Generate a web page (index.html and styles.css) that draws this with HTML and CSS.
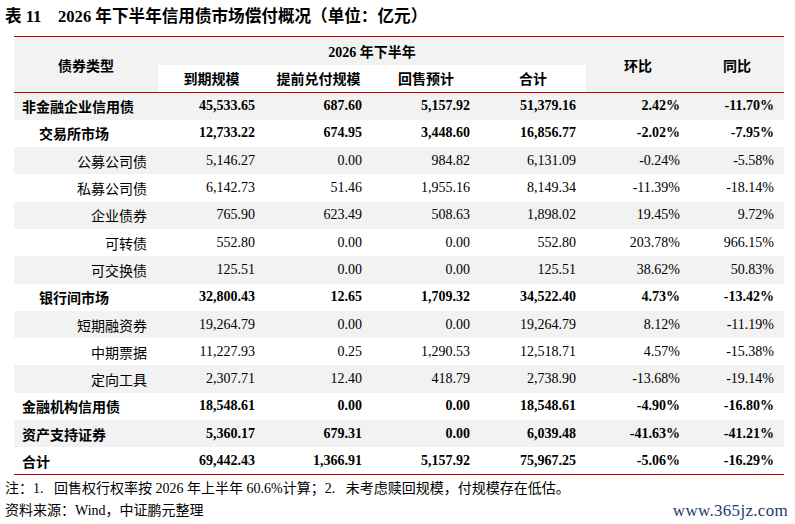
FILE: index.html
```html
<!DOCTYPE html>
<html lang="zh-CN">
<head>
<meta charset="utf-8">
<title>2026年下半年信用债市场偿付概况</title>
<link rel="stylesheet" href="styles.css">
</head>
<body>
<div class="page">
  <h1 class="title">表 11&ensp;&ensp;2026 年下半年信用债市场偿付概况（单位：亿元）</h1>
  <table class="data">
    <colgroup>
      <col class="c1"><col class="c2"><col class="c3"><col class="c4"><col class="c5"><col class="c6"><col class="c7">
    </colgroup>
    <thead>
      <tr class="h1">
        <th rowspan="2" class="grey">债券类型</th>
        <th colspan="4" class="grey period">2026 年下半年</th>
        <th rowspan="2" class="grey">环比</th>
        <th rowspan="2" class="grey">同比</th>
      </tr>
      <tr class="h2">
        <th>到期规模</th>
        <th>提前兑付规模</th>
        <th>回售预计</th>
        <th>合计</th>
      </tr>
    </thead>
    <tbody>
      <tr class="l1 g"><td class="lab">非金融企业信用债</td><td>45,533.65</td><td>687.60</td><td>5,157.92</td><td>51,379.16</td><td>2.42%</td><td>-11.70%</td></tr>
      <tr class="l2"><td class="lab">交易所市场</td><td>12,733.22</td><td>674.95</td><td>3,448.60</td><td>16,856.77</td><td>-2.02%</td><td>-7.95%</td></tr>
      <tr class="l3 g"><td class="lab">公募公司债</td><td>5,146.27</td><td>0.00</td><td>984.82</td><td>6,131.09</td><td>-0.24%</td><td>-5.58%</td></tr>
      <tr class="l3"><td class="lab">私募公司债</td><td>6,142.73</td><td>51.46</td><td>1,955.16</td><td>8,149.34</td><td>-11.39%</td><td>-18.14%</td></tr>
      <tr class="l3 g"><td class="lab">企业债券</td><td>765.90</td><td>623.49</td><td>508.63</td><td>1,898.02</td><td>19.45%</td><td>9.72%</td></tr>
      <tr class="l3"><td class="lab">可转债</td><td>552.80</td><td>0.00</td><td>0.00</td><td>552.80</td><td>203.78%</td><td>966.15%</td></tr>
      <tr class="l3 g"><td class="lab">可交换债</td><td>125.51</td><td>0.00</td><td>0.00</td><td>125.51</td><td>38.62%</td><td>50.83%</td></tr>
      <tr class="l2"><td class="lab">银行间市场</td><td>32,800.43</td><td>12.65</td><td>1,709.32</td><td>34,522.40</td><td>4.73%</td><td>-13.42%</td></tr>
      <tr class="l3 g"><td class="lab">短期融资券</td><td>19,264.79</td><td>0.00</td><td>0.00</td><td>19,264.79</td><td>8.12%</td><td>-11.19%</td></tr>
      <tr class="l3"><td class="lab">中期票据</td><td>11,227.93</td><td>0.25</td><td>1,290.53</td><td>12,518.71</td><td>4.57%</td><td>-15.38%</td></tr>
      <tr class="l3 g"><td class="lab">定向工具</td><td>2,307.71</td><td>12.40</td><td>418.79</td><td>2,738.90</td><td>-13.68%</td><td>-19.14%</td></tr>
      <tr class="l1"><td class="lab">金融机构信用债</td><td>18,548.61</td><td>0.00</td><td>0.00</td><td>18,548.61</td><td>-4.90%</td><td>-16.80%</td></tr>
      <tr class="l1 g"><td class="lab">资产支持证券</td><td>5,360.17</td><td>679.31</td><td>0.00</td><td>6,039.48</td><td>-41.63%</td><td>-41.21%</td></tr>
      <tr class="l1 last"><td class="lab">合计</td><td>69,442.43</td><td>1,366.91</td><td>5,157.92</td><td>75,967.25</td><td>-5.06%</td><td>-16.29%</td></tr>
    </tbody>
  </table>
  <p class="note">注：1.&ensp; 回售权行权率按 2026 年上半年 60.6%计算；2.&ensp; 未考虑赎回规模，付规模存在低估。</p>
  <div class="foot">
    <p class="source">资料来源：Wind，中证鹏元整理</p>
    <span class="mark">www.365jz.com</span>
  </div>
</div>
</body>
</html>
```

FILE: styles.css
```css
html, body {
  margin: 0;
  padding: 0;
  background: #ffffff;
}

.page {
  width: 795px;
  height: 524px;
  font-family: "Liberation Serif", "Noto Sans CJK SC", serif;
  color: #000;
  overflow: hidden;
}

.title {
  margin: 0;
  padding-left: 5px;
  height: 36px;
  line-height: 34px;
  font-size: 16.6px;
  font-weight: bold;
  white-space: nowrap;
}

.data {
  margin-left: 14px;
  width: 770px;
  border-collapse: collapse;
  table-layout: fixed;
  font-size: 14px;
  border-top: 1.5px solid #c00000;
  border-bottom: 1.5px solid #c00000;
}

.c1 { width: 144px; }
.c2 { width: 107px; }
.c3 { width: 107px; }
.c4 { width: 108px; }
.c5 { width: 106px; }
.c6 { width: 104px; }
.c7 { width: 94px; }

.data th {
  font-weight: bold;
  text-align: center;
  padding: 0;
  white-space: nowrap;
}

.h1 { height: 28px; }
.h2 { height: 28px; }

.h1 .period { vertical-align: middle; }

.grey { background: #f2f2f2; }

.h2 th {
  background: #ffffff;
  border-bottom: 1.5px solid #c00000;
}

.h1 th[rowspan] {
  border-bottom: 1.5px solid #c00000;
}

.data tbody tr {
  height: 27.3px;
}

.data tbody tr.g {
  background: #f2f2f2;
}

.data td {
  padding: 0 10px 0 0;
  text-align: right;
  white-space: nowrap;
  vertical-align: middle;
}

.data td.lab {
  text-align: left;
}

.l1 td { font-weight: bold; }
.l1 td.lab { padding-left: 8px; }

.l2 td { font-weight: bold; }
.l2 td.lab { padding-left: 25px; }

.l3 td { font-weight: normal; }
.l3 td.lab {
  text-align: right;
  padding-right: 11px;
}

.note {
  margin: 3px 0 0 5px;
  font-size: 14px;
  line-height: 22px;
  white-space: nowrap;
}

.foot {
  display: flex;
  align-items: center;
  justify-content: space-between;
  padding: 0 7px 0 5px;
}

.source {
  margin: 0;
  font-size: 14px;
  line-height: 22px;
}

.mark {
  font-family: "Liberation Serif", serif;
  font-size: 17px;
  color: #1f3a6e;
  letter-spacing: 0.3px;
}
```
